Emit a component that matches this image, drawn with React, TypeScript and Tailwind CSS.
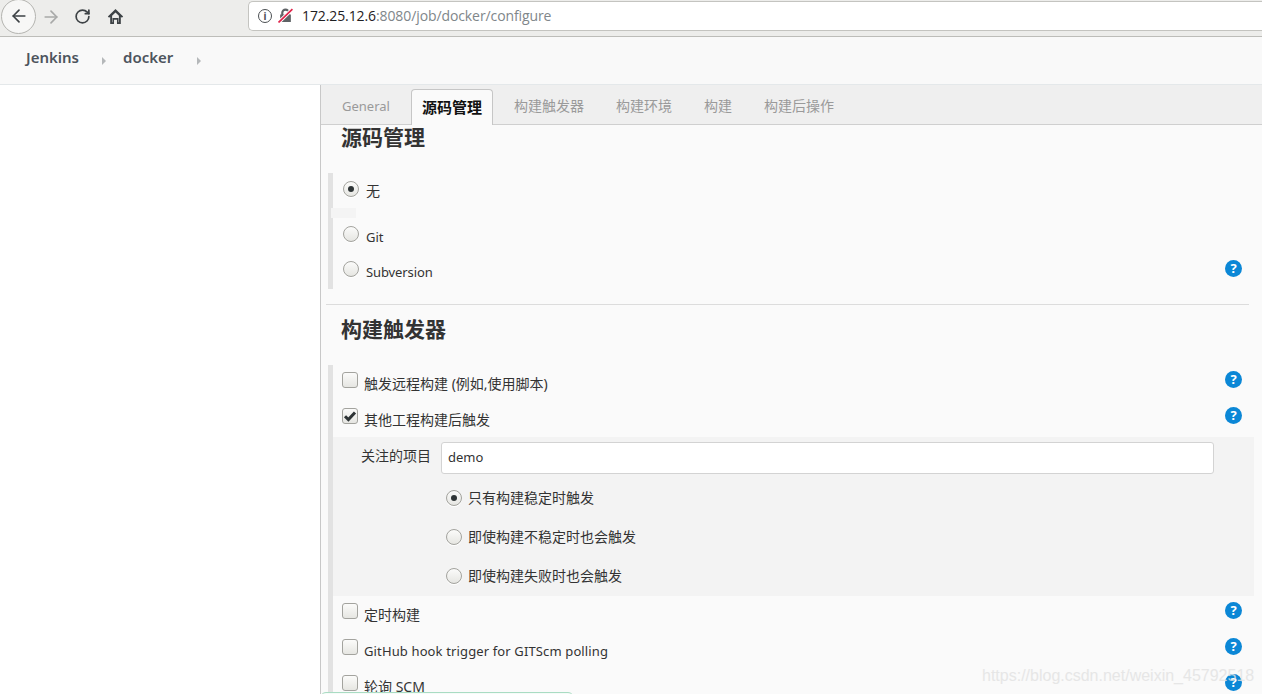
import React from "react";
import { ArrowLeft, ArrowRight, RotateCw } from "lucide-react";

const font = "font-['Noto_Sans','Noto_Sans_CJK_SC',sans-serif]";

function Help() {
  return (
    <span className="ml-auto mr-[12px] -mt-[1px] flex h-[17px] w-[17px] shrink-0 items-center justify-center rounded-full bg-[#0b87d6] text-[13px] font-bold leading-none text-white">
      ?
    </span>
  );
}

function Radio({ on = false }: { on?: boolean }) {
  return (
    <span className="flex h-[16px] w-[16px] shrink-0 items-center justify-center rounded-full border border-[#a3a39e] bg-linear-to-b from-[#fbfbfa] to-[#e6e6e2] shadow-[0_1px_0_#ffffff]">
      {on && <span className="h-[6px] w-[6px] rounded-full bg-[#2e3436]" />}
    </span>
  );
}

function Check({ on = false }: { on?: boolean }) {
  return (
    <span className="flex h-[16px] w-[16px] shrink-0 items-center justify-center rounded-[3px] border border-[#a3a39e] bg-linear-to-b from-[#fbfbfa] to-[#e6e6e2]">
      {on && (
        <svg viewBox="0 0 14 14" className="h-[14px] w-[14px]">
          <path d="M2 7.2 L5.4 10.6 L12 3.4" fill="none" stroke="#2e3436" strokeWidth="3" />
        </svg>
      )}
    </span>
  );
}

function CheckRow({ label, on, className, labelClass = "text-[14px]" }: { label: string; on?: boolean; className: string; labelClass?: string }) {
  return (
    <div className={`flex items-start pl-[9px] ${className}`}>
      <Check on={on} />
      <span className={`ml-[6px] mt-[2px] leading-[20px] text-[#333333] ${labelClass}`}>{label}</span>
      <Help />
    </div>
  );
}

function SubRadio({ label, on, className }: { label: string; on?: boolean; className: string }) {
  return (
    <div className={`flex items-center pl-[113px] ${className}`}>
      <Radio on={on} />
      <span className="ml-[6px] text-[14px] leading-[20px] text-[#333333]">{label}</span>
    </div>
  );
}

export default function App() {
  return (
    <div className={`relative flex h-[694px] w-[1262px] flex-col overflow-hidden bg-white ${font}`}>
      {/* Browser toolbar */}
      <div className="flex h-[37px] shrink-0 items-center border-b border-[#bdbdb9] bg-[#ededeb]">
        <div className="-mt-[4px] ml-[1px] flex h-[35px] w-[35px] shrink-0 items-center justify-center rounded-full border border-[#b4b4b0] bg-[#f7f7f6]">
          <ArrowLeft size={20} strokeWidth={2} color="#3d4245" />
        </div>
        <ArrowRight size={20} strokeWidth={2} color="#a8a9a8" className="-mt-[3px] ml-[5px]" />
        <RotateCw size={17} strokeWidth={2.4} color="#3d4245" className="-mt-[3px] ml-[13px]" />
        <svg viewBox="0 0 16 16" className="-mt-[3px] ml-[16px] h-[17px] w-[17px]">
          <path d="M8 1 L0.8 8 L2 9.2 L3 8.3 V15 H6.6 V11 H9.4 V15 H13 V8.3 L14 9.2 L15.2 8 Z M4.8 13.4 V7.4 L8 4.2 L11.2 7.4 V13.4 H10.8 V9.4 H5.2 V13.4 Z" fill="#3d4245" fillRule="evenodd" />
        </svg>
        <div className="-mt-[5px] ml-[124px] flex h-[30px] flex-1 items-center rounded-l-[5px] border border-r-0 border-[#c4c4c0] bg-white pl-[9px]">
          <span className="flex h-[14px] w-[14px] items-center justify-center rounded-full border-[1.5px] border-[#4b4f52] text-[10px] font-bold leading-none text-[#4b4f52]">i</span>
          <svg viewBox="0 0 14 14" className="ml-[6px] h-[15px] w-[15px]">
            <path d="M3 6 V4.5 a4 4 0 0 1 8 0 V6 h1 V13 H2 V6 Z M5 6 h4 V4.5 a2 2 0 0 0 -4 0 Z" fill="#5e6265" fillRule="evenodd" />
            <path d="M0.5 13.5 L13.5 1" stroke="#ffffff" strokeWidth="3.4" />
            <path d="M0.5 13.5 L13.5 1" stroke="#e0244a" strokeWidth="1.6" />
          </svg>
          <span className="ml-[9px] font-['Open_Sans','Noto_Sans',sans-serif] text-[14px] leading-none tracking-[-0.1px] text-[#1e2022]">
            172.25.12.6<span className="text-[#80868a]">:8080/job/docker/configure</span>
          </span>
        </div>
      </div>

      {/* Breadcrumbs */}
      <div className="flex h-[48px] shrink-0 items-center border-b border-[#e4e8ea] bg-[#f9f9f9] pb-[7px] pl-[26px] text-[15px] font-semibold text-[#4d545d]">
        <span>Jenkins</span>
        <span className="ml-[23px] mt-[8px] h-0 w-0 border-y-[4px] border-l-[4px] border-y-transparent border-l-[#b5b8ba]" />
        <span className="ml-[17px]">docker</span>
        <span className="ml-[24px] mt-[8px] h-0 w-0 border-y-[4px] border-l-[4px] border-y-transparent border-l-[#b5b8ba]" />
      </div>

      <div className="flex min-h-0 flex-1">
        <div className="w-[320px] shrink-0 bg-white" />
        <div className="min-w-0 flex-1 border-l border-[#c8c8c8] bg-[#fafafa]">
          {/* Tabs */}
          <div className="flex h-[40px] items-end border-b border-[#cfcfcf] bg-[#efefef] text-[14px] text-[#9a9a9a]">
            <span className="ml-[21px] mb-[8px] text-[13px] leading-[20px]">General</span>
            <span className="relative top-[1px] ml-[21px] flex h-[36px] w-[82px] items-center justify-center rounded-t-[4px] border border-b-0 border-[#c6c6c6] bg-[#fafafa] pb-[1px] text-[15px] font-bold text-[#111111]">
              源码管理
            </span>
            <span className="ml-[21px] mb-[8px] leading-[20px]">构建触发器</span>
            <span className="ml-[32px] mb-[8px] leading-[20px]">构建环境</span>
            <span className="ml-[32px] mb-[8px] leading-[20px]">构建</span>
            <span className="ml-[32px] mb-[8px] leading-[20px]">构建后操作</span>
          </div>

          {/* 源码管理 */}
          <h2 className="ml-[20px] -mt-[2px] h-[50px] text-[21px] font-bold leading-[28px] text-[#333333]">源码管理</h2>
          <div className="ml-[7px] mr-[8px] h-[116px] border-l-[5px] border-[#e2e2e2]">
            <div className="flex h-[35px] items-start pl-[10px] pt-[8px]">
              <Radio on />
              <span className="ml-[7px] text-[14px] leading-[20px] text-[#333333]">无</span>
            </div>
            <div className="-ml-[2px] h-[10px] w-[25px] bg-[#f4f4f4]" />
            <div className="flex h-[33px] items-start pl-[10px] pt-[8px]">
              <Radio />
              <span className="ml-[7px] mt-[1px] text-[13px] leading-[20px] text-[#333333]">Git</span>
            </div>
            <div className="flex items-start pl-[10px] pt-[10px]">
              <Radio />
              <span className="ml-[7px] mt-[1px] text-[13px] leading-[20px] tracking-[-0.1px] text-[#333333]">Subversion</span>
              <Help />
            </div>
          </div>
          <div className="ml-[5px] mr-[13px] mt-[15px] border-t border-[#dcdcdc]" />

          {/* 构建触发器 */}
          <h2 className="ml-[20px] h-[60px] pt-[10px] text-[21px] font-bold leading-[28px] text-[#333333]">构建触发器</h2>
          <div className="ml-[7px] mr-[8px] border-l-[5px] border-[#e2e2e2]">
            <CheckRow className="h-[36px] pt-[7px]" label="触发远程构建 (例如,使用脚本)" />
            <CheckRow className="h-[36px] pt-[7px]" label="其他工程构建后触发" on />
            <div className="h-[159px] bg-[#f3f3f3]">
              <div className="flex pt-[5px]">
                <span className="ml-[28px] mt-[4px] text-[14px] leading-[20px] text-[#333333]">关注的项目</span>
                <div className="ml-[10px] flex h-[32px] w-[773px] items-center rounded-[3px] border border-[#d3d3d3] bg-white pl-[6px] text-[13px] text-[#333333]">
                  demo
                </div>
              </div>
              <SubRadio className="mt-[14px] h-[20px]" label="只有构建稳定时触发" on />
              <SubRadio className="mt-[19px] h-[20px]" label="即使构建不稳定时也会触发" />
              <SubRadio className="mt-[19px] h-[20px]" label="即使构建失败时也会触发" />
            </div>
            <CheckRow className="h-[36px] pt-[7px]" label="定时构建" />
            <CheckRow className="h-[36px] pt-[7px]" labelClass="text-[13px] tracking-[0.13px]" label="GitHub hook trigger for GITScm polling" />
            <CheckRow className="h-[36px] pt-[7px]" label="轮询 SCM" />
          </div>
        </div>
      </div>

      {/* Status tooltip peeking at the bottom edge */}
      <div className="absolute bottom-[-6px] left-[320px] h-[8px] w-[254px] rounded-t-[6px] border border-[#a9dcc3] bg-[#f6fbf8]" />
      {/* Watermark */}
      <div className="absolute left-[982px] top-[666px] font-['Liberation_Sans',sans-serif] text-[16px] leading-[20px] text-[#e2e2e2] opacity-80">
        https://blog.csdn.net/weixin_45792518
      </div>
    </div>
  );
}
